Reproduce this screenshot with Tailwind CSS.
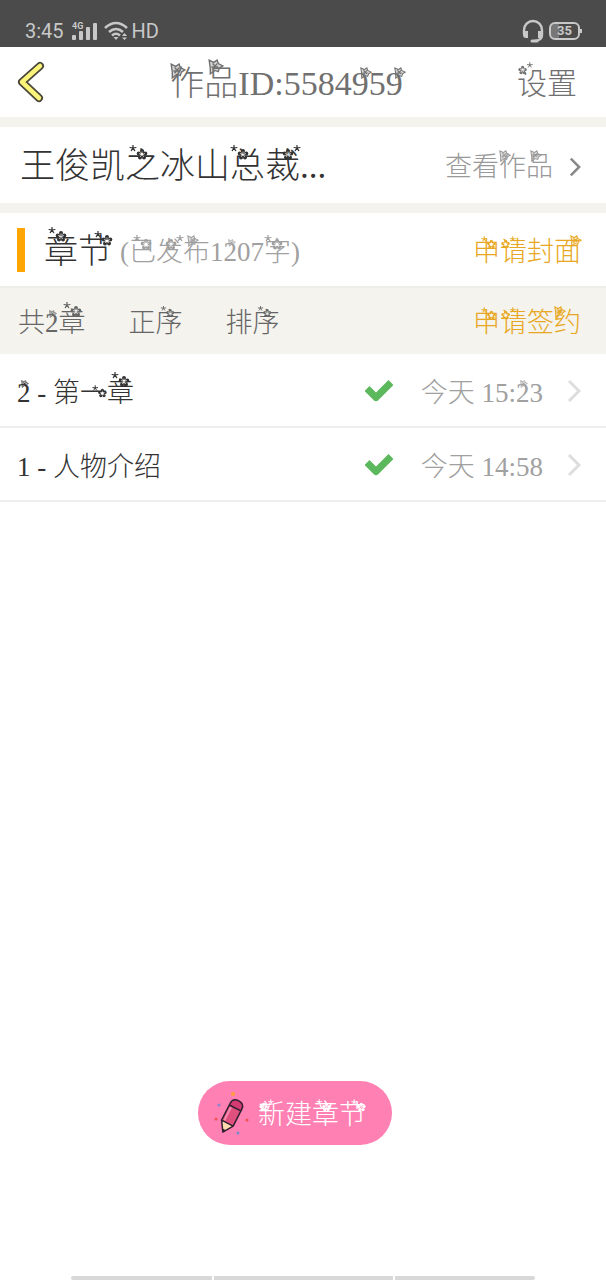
<!DOCTYPE html>
<html lang="zh-CN">
<head>
<meta charset="utf-8">
<meta name="viewport" content="width=device-width, initial-scale=1">
<title>作品管理</title>
<script src="https://cdn.jsdelivr.net/npm/@tailwindcss/browser@4"></script>
</head>
<body class="flex min-h-screen flex-col bg-white font-['Liberation_Serif','Noto_Sans_CJK_SC',sans-serif] text-[27px] leading-10 font-light whitespace-nowrap text-[#333]">

<!-- Shared ornaments and icons -->
<svg class="hidden" aria-hidden="true">
  <symbol id="blossom" viewBox="0 0 20 16">
    <path d="M4 0v3L1 2.500M4 3l3-.5M4 3L2.300 5.600M4 3l1.700 2.600" fill="none" stroke="currentColor" stroke-width="1.200" stroke-linecap="round"/>
    <g fill="currentColor">
      <circle cx="13" cy="6" r="2"/><circle cx="9.700" cy="8.600" r="2"/><circle cx="16.300" cy="8.600" r="2"/><circle cx="11" cy="12.500" r="2"/><circle cx="15" cy="12.500" r="2"/>
    </g>
    <path d="M13 9.500v-3M13 9.500l-3-1M13 9.500l3-1M13 9.500l-1.800 2.500M13 9.500l1.800 2.500" stroke="#fff" stroke-opacity=".7" stroke-width=".9"/>
  </symbol>
  <symbol id="rose" viewBox="0 0 14 14">
    <path d="M1 1l4 2 3-2 1 3 4 2-3 2-1 3-3-1-4 3 0-5zM4 4l4 4M8 4l-4 5M3 7h6" fill="currentColor" fill-opacity=".3" stroke="currentColor" stroke-width="1.200"/>
  </symbol>
  <symbol id="chevron" viewBox="0 0 14 24">
    <path d="M2 2l10 10L2 22" fill="none" stroke="currentColor" stroke-width="3"/>
  </symbol>
  <symbol id="check" viewBox="0 0 28 22">
    <path d="M4.500 11l6.500 6.500L23.500 5" fill="none" stroke="#5cb85c" stroke-width="7" stroke-linejoin="round" stroke-linecap="square"/>
  </symbol>
</svg>

<div class="flex h-[47px] items-end justify-between bg-[#4b4b4b] pr-6 pb-1 pl-[25px] font-[Roboto,sans-serif] text-[#c8c8c8]">
  <div class="flex items-center gap-1 text-xl leading-6 font-normal">
    <span class="mr-1">3:45</span>
    <svg class="h-5 w-7" viewBox="0 0 28 20" fill="#c8c8c8" aria-hidden="true">
      <text x="0" y="8" font-size="9" font-weight="700" font-family="Roboto">4G</text>
      <rect x="0" y="14" width="4" height="5" rx="1"/><rect x="7" y="10" width="4" height="9" rx="1"/><rect x="14" y="6" width="4" height="13" rx="1"/><rect x="21" y="2" width="4" height="17" rx="1"/>
    </svg>
    <svg class="h-5 w-6" viewBox="0 0 24 20" fill="none" stroke="#c8c8c8" stroke-width="2.600" aria-hidden="true">
      <path d="M1 7Q12-3 23 7M5 11q7-6 14 0M8 14.500q4-3.500 8 0"/>
      <path d="M9.500 16h5L12 19zM18 15l2.500-3 2.500 3zM18 16.500h5L20.500 19z" fill="#c8c8c8" stroke="none"/>
    </svg>
    <span>HD</span>
  </div>
  <div class="flex items-center gap-1">
    <svg class="h-6 w-6" viewBox="0 0 24 24" fill="none" stroke="#c8c8c8" stroke-width="2.400" aria-hidden="true">
      <path d="M3 15v-4a9 9 0 0 1 18 0v5q0 5-7 6"/>
      <path d="M2 12h5v7H5q-3 0-3-3zM22 12h-5v7h2q3 0 3-3z" fill="#c8c8c8" stroke="none"/>
      <path d="M11 22h5" stroke-width="3" stroke-linecap="round"/>
    </svg>
    <div class="flex items-center">
      <span class="flex h-[18px] w-[31px] items-center justify-center rounded-md border-2 border-[#c8c8c8] bg-linear-to-r from-[#777] from-30% to-transparent to-30% text-[13px] font-bold">35</span>
      <span class="h-1 w-[2px] bg-[#c8c8c8]"></span>
    </div>
  </div>
</div>

<header class="grid h-[70px] grid-cols-[1fr_auto_1fr] items-center pr-[29px] pl-4 text-[#707070]">
  <button type="button" aria-label="返回" class="justify-self-start">
    <svg class="h-11 w-8" viewBox="0 0 32 44" fill="none" stroke-linecap="round" stroke-linejoin="round" aria-hidden="true">
      <path d="M24 6L6 22l17 16" stroke="#4a4638" stroke-width="8"/>
      <path d="M24 6L6 22l17 16" stroke="#fbf47a" stroke-width="4.500"/>
    </svg>
  </button>
  <h1 class="-ml-9 pt-1 pl-4 text-[34px]"><span class="relative inline-block leading-none">作<svg class="absolute -top-1 left-0 size-4" aria-hidden="true"><use href="#rose"/></svg></span><span class="relative inline-block leading-none">品<svg class="absolute -top-2 left-1 size-4" aria-hidden="true"><use href="#rose"/></svg></span>ID:5584<span class="relative inline-block leading-none">9<svg class="absolute top-0 left-2 size-3" aria-hidden="true"><use href="#rose"/></svg></span>5<span class="relative inline-block leading-none">9<svg class="absolute top-0 left-2 size-3" aria-hidden="true"><use href="#rose"/></svg></span></h1>
  <button type="button" class="justify-self-end pt-1 text-[30px]"><span class="relative inline-block leading-none">设<svg class="absolute -top-2 left-0 h-4 w-4 -scale-x-100" aria-hidden="true"><use href="#blossom"/></svg></span>置</button>
</header>

<main class="border-t-10 border-[#f4f3ee]">
  <section class="flex h-[76px] items-center justify-between pt-1 pr-[25px] pl-5">
    <h2 class="text-[35px]">王俊凯<span class="relative inline-block leading-none">之<svg class="absolute -top-1 left-1 h-4 w-5" aria-hidden="true"><use href="#blossom"/></svg></span>冰山<span class="relative inline-block leading-none">总<svg class="absolute -top-1 left-0 h-4 w-5" aria-hidden="true"><use href="#blossom"/></svg></span><span class="relative inline-block leading-none">裁<svg class="absolute -top-1 left-4 h-4 w-5 -scale-x-100" aria-hidden="true"><use href="#blossom"/></svg></span>...</h2>
    <a href="#work" class="flex items-center gap-4 text-[#999]">
      <span>查看<span class="relative inline-block leading-none">作<svg class="absolute -top-1 left-0 size-3" aria-hidden="true"><use href="#rose"/></svg></span><span class="relative inline-block leading-none">品<svg class="absolute -top-1 left-1 size-3" aria-hidden="true"><use href="#rose"/></svg></span></span>
      <svg class="h-5 w-3 text-[#888]" aria-hidden="true"><use href="#chevron"/></svg>
    </a>
  </section>

  <section class="border-t-10 border-[#f4f3ee]">
    <div class="flex h-[73px] items-center pr-[25px] pl-[17px]">
      <span class="h-11 w-2 bg-[#ffa500]"></span>
      <h2 class="ml-[19px] pt-1 text-[34px]"><span class="relative inline-block leading-none">章<svg class="absolute -top-2 left-1 h-4 w-5" aria-hidden="true"><use href="#blossom"/></svg></span><span class="relative inline-block leading-none">节<svg class="absolute -top-1 left-4 h-4 w-5" aria-hidden="true"><use href="#blossom"/></svg></span></h2>
      <span class="ml-2 pt-1 text-[#a0a0a0]">(<span class="relative inline-block leading-none">已<svg class="absolute -top-1 left-1 h-4 w-5" aria-hidden="true"><use href="#blossom"/></svg></span><span class="relative inline-block leading-none">发<svg class="absolute -top-1 left-2 h-4 w-5 -scale-x-100" aria-hidden="true"><use href="#blossom"/></svg></span><span class="relative inline-block leading-none">布<svg class="absolute -top-1 left-1 size-3" aria-hidden="true"><use href="#rose"/></svg></span>1<span class="relative inline-block leading-none">2<svg class="absolute top-0 left-1 size-2" aria-hidden="true"><use href="#rose"/></svg></span>07<span class="relative inline-block leading-none">字<svg class="absolute -top-1 left-0 h-4 w-5" aria-hidden="true"><use href="#blossom"/></svg></span>)</span>
      <button type="button" class="ml-auto pt-1 text-[#e8a723]"><span class="relative inline-block leading-none">申<svg class="absolute -top-1 left-2 h-4 w-4" aria-hidden="true"><use href="#blossom"/></svg></span><span class="relative inline-block leading-none">请<svg class="absolute -top-1 left-0 h-4 w-4 -scale-x-100" aria-hidden="true"><use href="#blossom"/></svg></span>封<span class="relative inline-block leading-none">面<svg class="absolute -top-1 left-4 size-3" aria-hidden="true"><use href="#rose"/></svg></span></button>
    </div>

    <div class="flex h-[68px] items-center border-t-2 border-[#eeedea] bg-[#f4f3ee] pt-1 pr-[25px] pl-[18px] text-[#666]">
      <span>共<span class="relative inline-block leading-none">2<svg class="absolute top-0 left-1 size-2" aria-hidden="true"><use href="#rose"/></svg></span><span class="relative inline-block leading-none">章<svg class="absolute -top-2 left-1 h-4 w-5" aria-hidden="true"><use href="#blossom"/></svg></span></span>
      <button type="button" class="ml-[43px]">正<span class="relative inline-block leading-none">序<svg class="absolute -top-1 left-1 h-3 w-4" aria-hidden="true"><use href="#blossom"/></svg></span></button>
      <button type="button" class="ml-[43px]">排<span class="relative inline-block leading-none">序<svg class="absolute -top-1 left-1 h-3 w-4" aria-hidden="true"><use href="#blossom"/></svg></span></button>
      <button type="button" class="ml-auto text-[#e8a723]"><span class="relative inline-block leading-none">申<svg class="absolute -top-1 left-2 h-4 w-4" aria-hidden="true"><use href="#blossom"/></svg></span><span class="relative inline-block leading-none">请<svg class="absolute -top-1 left-0 h-4 w-4 -scale-x-100" aria-hidden="true"><use href="#blossom"/></svg></span>签<span class="relative inline-block leading-none">约<svg class="absolute -top-1 left-0 size-3" aria-hidden="true"><use href="#rose"/></svg></span></button>
    </div>

    <ul>
      <li>
        <a href="#chapter-2" class="flex h-[74px] items-center border-b-2 border-[#eee] pt-[2px] pr-[25px] pl-[17px]">
          <span class="pt-1"><span class="relative inline-block leading-none">2<svg class="absolute top-0 left-1 size-2" aria-hidden="true"><use href="#rose"/></svg></span> - 第<span class="relative inline-block leading-none">一<svg class="absolute top-1 left-3 h-4 w-4" aria-hidden="true"><use href="#blossom"/></svg></span><span class="relative inline-block leading-none">章<svg class="absolute -top-2 left-1 h-4 w-5" aria-hidden="true"><use href="#blossom"/></svg></span></span>
          <svg class="ml-auto h-[22px] w-7" aria-label="已发布" role="img"><use href="#check"/></svg>
          <span class="ml-7 pt-1 text-[#a0a0a0]">今天 15:<span class="relative inline-block leading-none">2<svg class="absolute top-0 left-1 size-2" aria-hidden="true"><use href="#rose"/></svg></span>3</span>
          <svg class="ml-6 h-6 w-[14px] text-[#ddd]" aria-hidden="true"><use href="#chevron"/></svg>
        </a>
      </li>
      <li>
        <a href="#chapter-1" class="flex h-[74px] items-center border-b-2 border-[#eee] pt-[2px] pr-[25px] pl-[17px]">
          <span class="pt-1">1 - 人物介绍</span>
          <svg class="ml-auto h-[22px] w-7" aria-label="已发布" role="img"><use href="#check"/></svg>
          <span class="ml-7 pt-1 text-[#a0a0a0]">今天 14:58</span>
          <svg class="ml-6 h-6 w-[14px] text-[#ddd]" aria-hidden="true"><use href="#chevron"/></svg>
        </a>
      </li>
    </ul>
  </section>
</main>

<footer class="mt-auto flex flex-col items-center">
  <button type="button" class="mr-4 mb-[131px] flex h-16 items-center gap-2 rounded-full bg-[#ff80b3] pr-[26px] pl-4 text-white">
    <svg class="h-11 w-9" viewBox="0 0 36 44" aria-hidden="true">
      <g transform="translate(17 25) rotate(27)">
        <path d="M-6.500-9v-2q0-6 6.500-6t6.500 6v2z" fill="#d63a72"/>
        <path d="M-6.500-9h13V8h-13z" fill="#e0507f"/>
        <path d="M-4-8v15" stroke="#f58aae" stroke-width="2"/>
        <path d="M-6.500 8h13L0 18z" fill="#ffdcae"/>
        <path d="M-2 15h4L0 18z" fill="#302030"/>
        <path d="M-6.500-11q0-6 6.500-6t6.500 6V8L0 18-6.500 8zM-6.500-9h13M-6.500 8h13" fill="none" stroke="#302030" stroke-width="1.500" stroke-linejoin="round"/>
      </g>
      <circle cx="19" cy="3" r="2" fill="#ff9e3d"/><circle cx="5" cy="14" r="1.500" fill="#8b82d0"/><circle cx="2" cy="28" r="1.500" fill="#f0524f"/><circle cx="33" cy="29" r="1.500" fill="#f0524f"/><circle cx="24" cy="42" r="1.500" fill="#7a8bd0"/>
    </svg>
    <span class="pt-1"><span class="relative inline-block leading-none">新<svg class="absolute -top-1 left-0 h-4 w-4 -scale-x-100" aria-hidden="true"><use href="#blossom"/></svg></span>建<span class="relative inline-block leading-none">章<svg class="absolute -top-1 left-1 h-4 w-4" aria-hidden="true"><use href="#blossom"/></svg></span><span class="relative inline-block leading-none">节<svg class="absolute -top-1 left-3 h-4 w-4" aria-hidden="true"><use href="#blossom"/></svg></span></span>
  </button>
  <div class="flex w-full gap-[2px] px-[71px]" aria-hidden="true">
    <span class="h-1 flex-[141] rounded-l-sm bg-[#d8d8d8]"></span>
    <span class="h-1 flex-[179] bg-[#d8d8d8]"></span>
    <span class="h-1 flex-[140] rounded-r-sm bg-[#d8d8d8]"></span>
  </div>
</footer>
</body>
</html>
